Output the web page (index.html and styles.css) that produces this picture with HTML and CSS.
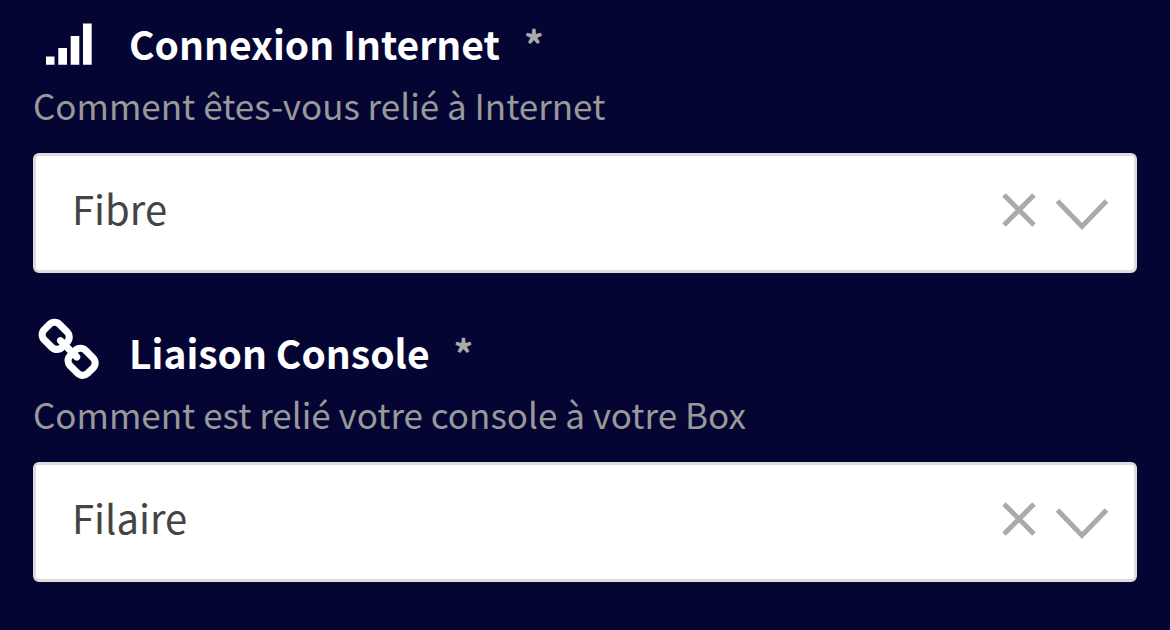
FILE: index.html
```html
<!DOCTYPE html>
<html lang="fr">
<head>
<meta charset="utf-8">
<title>Connexion</title>
<link rel="stylesheet" href="styles.css">
</head>
<body>
<form class="form">
  <div class="field">
    <div class="heading">
      <svg class="icon" viewBox="0 0 72 72" aria-hidden="true"><path d="M13 49.500h8.500v8.300H13zM25.300 41h8.700v16.800h-8.700zM37.700 29h8.600v28.800h-8.600zM50 16.500h8.700v41.300H50z"/></svg>
      <label class="title" for="connexion">Connexion Internet</label>
      <span class="required">*</span>
    </div>
    <p class="hint" id="connexion-hint">Comment êtes-vous relié à Internet</p>
    <div class="control">
      <select class="select" id="connexion" aria-describedby="connexion-hint" required>
        <option>Fibre</option>
      </select>
      <button class="clear" type="button" aria-label="Effacer"><svg class="cross" viewBox="0 0 36 36"><path d="M3 3l30 30M33 3L3 33"/></svg></button>
      <svg class="chevron" viewBox="0 0 54 36" aria-hidden="true"><path d="M2.500 3L27 28.500 51.500 3"/></svg>
    </div>
  </div>
  <div class="field">
    <div class="heading">
      <svg class="icon" viewBox="-136 -60 1955 1955" aria-hidden="true"><path d="M1456 1216q0-40-28-68l-208-208q-28-28-68-28-42 0-72 32 3 3 19 18.500t21.500 21.500 15 19 13 25.500 3.500 27.500q0 40-28 68t-68 28q-15 0-27.500-3.500t-25.500-13-19-15-21.500-21.500-18.500-19q-33 31-33 73 0 40 28 68l206 207q27 27 68 27 40 0 68-26l147-146q28-28 28-67zm-703-705q0-40-28-68l-206-207q-28-28-68-28-39 0-68 27l-147 146q-28 28-28 67 0 40 28 68l208 208q27 27 68 27 42 0 72-31-3-3-19-18.500t-21.500-21.500-15-19-13-25.500-3.500-27.500q0-40 28-68t68-28q15 0 27.500 3.500t25.500 13 19 15 21.500 21.500 18.500 19q33-31 33-73zm895 705q0 120-85 203l-147 146q-83 83-203 83-121 0-204-85l-206-207q-83-83-83-203 0-123 88-209l-88-88q-86 88-208 88-120 0-204-84l-208-208q-84-84-84-204t85-203l147-146q83-83 203-83 121 0 204 85l206 207q83 83 83 203 0 123-88 209l88 88q86-88 208-88 120 0 204 84l208 208q84 84 84 204z"/></svg>
      <label class="title" for="liaison">Liaison Console</label>
      <span class="required">*</span>
    </div>
    <p class="hint" id="liaison-hint">Comment est relié votre console à votre Box</p>
    <div class="control">
      <select class="select" id="liaison" aria-describedby="liaison-hint" required>
        <option>Filaire</option>
      </select>
      <button class="clear" type="button" aria-label="Effacer"><svg class="cross" viewBox="0 0 36 36"><path d="M3 3l30 30M33 3L3 33"/></svg></button>
      <svg class="chevron" viewBox="0 0 54 36" aria-hidden="true"><path d="M2.500 3L27 28.500 51.500 3"/></svg>
    </div>
  </div>
</form>
</body>
</html>
```

FILE: styles.css
```css
* {
  box-sizing: border-box;
}

body {
  margin: 0;
  background: #050533;
  font-family: "Noto Sans CJK SC", "Noto Sans", sans-serif;
}

.form {
  display: flex;
  flex-direction: column;
  gap: 43px;
  padding: 7px 33px 48px;
}

.heading {
  display: flex;
  align-items: flex-start;
  padding-bottom: 2px;
}

.icon {
  flex: none;
  width: 72px;
  height: 72px;
  margin-right: 24px;
  fill: #fff;
}

.title,
.required {
  font-size: 39px;
  font-weight: 600;
  line-height: 72px;
}

.title {
  color: #fff;
}

.required {
  margin-left: 24px;
  color: #aaa;
}

.hint {
  margin: 0 0 24px;
  color: #999;
  font-size: 35px;
  line-height: 48px;
}

.control {
  position: relative;
}

.select {
  display: block;
  width: 100%;
  height: 120px;
  padding: 0 160px 10px 36px;
  border: 3px solid #ddd;
  border-radius: 6px;
  background: #fff;
  color: #444;
  font-family: inherit;
  font-size: 40px;
  appearance: none;
}

.clear {
  position: absolute;
  top: 39px;
  right: 100px;
  width: 36px;
  height: 36px;
  padding: 0;
  border: 0;
  background: none;
}

.cross {
  display: block;
  width: 36px;
  height: 36px;
}

.chevron {
  position: absolute;
  top: 45px;
  right: 28px;
  width: 54px;
  height: 36px;
  pointer-events: none;
}

.cross,
.chevron {
  fill: none;
  stroke: #aaa;
  stroke-width: 5;
}
```
